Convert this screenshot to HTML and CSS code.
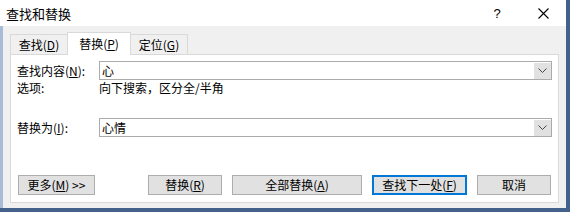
FILE: index.html
```html
<!DOCTYPE html>
<html lang="zh-CN">
<head>
<meta charset="utf-8">
<link rel="stylesheet" href="styles.css">
</head>
<body>
<div class="window">
  <div class="titlebar">
    <span class="title">查找和替换</span>
    <span class="help">?</span>
    <span class="close"><svg width="11" height="11" viewBox="0 0 11 11"><path d="M0.5 0.5 L10.5 10.5 M10.5 0.5 L0.5 10.5" stroke="#000" stroke-width="1.1" fill="none"/></svg></span>
  </div>
  <div class="main">
    <div class="gutter"></div>
    <div class="body">
      <div class="tabs">
        <div class="tab">查找(<u>D</u>)</div>
        <div class="tab active">替换(<u>P</u>)</div>
        <div class="tab">定位(<u>G</u>)</div>
      </div>
      <div class="panel">
        <div class="row">
          <span class="label">查找内容(<u>N</u>):</span>
          <div class="combo"><span class="value">心</span><span class="drop"><svg width="9" height="5" viewBox="0 0 9 5"><path d="M0.5 0.5 L4.5 4.5 L8.5 0.5" stroke="#444" stroke-width="1" fill="none"/></svg></span></div>
        </div>
        <div class="row options">
          <span class="label">选项:</span>
          <span class="opt">向下搜索，区分全/半角</span>
        </div>
        <div class="row replace">
          <span class="label">替换为(<u>I</u>):</span>
          <div class="combo"><span class="value">心情</span><span class="drop"><svg width="9" height="5" viewBox="0 0 9 5"><path d="M0.5 0.5 L4.5 4.5 L8.5 0.5" stroke="#444" stroke-width="1" fill="none"/></svg></span></div>
        </div>
        <div class="buttons">
          <button class="btn more">更多(<u>M</u>) &gt;&gt;</button>
          <div class="group">
            <button class="btn w74">替换(<u>R</u>)</button>
            <button class="btn w130">全部替换(<u>A</u>)</button>
            <button class="btn w95 default">查找下一处(<u>F</u>)</button>
            <button class="btn w74">取消</button>
          </div>
        </div>
      </div>
    </div>
  </div>
</div>
</body>
</html>
```
FILE: styles.css
```css
html, body {
  margin: 0;
  padding: 0;
}
body {
  width: 570px;
  height: 212px;
  background: #44618b;
  font-family: "Noto Sans CJK SC", "DejaVu Sans", sans-serif;
  font-size: 12px;
  color: #000;
  overflow: hidden;
}
u {
  text-decoration: underline;
  text-underline-offset: 1px;
}
.window {
  width: 566px;
  height: 208px;
  display: flex;
  flex-direction: column;
  background: #f0f0f0;
}
.titlebar {
  height: 26px;
  background: #fff;
  display: flex;
  align-items: center;
  padding-left: 6px;
  font-size: 13px;
}
.title {
  flex: 1;
}
.help {
  width: 12px;
  text-align: center;
  font-family: "Liberation Sans", sans-serif;
  font-size: 13px;
  margin-right: 35px;
}
.close {
  display: flex;
  margin-right: 17px;
}
.main {
  flex: 1;
  display: flex;
}
.gutter {
  width: 3px;
  background: #a8bcd8;
}
.body {
  flex: 1;
  padding: 6px 4px 5px 7px;
  display: flex;
  flex-direction: column;
}
.tabs {
  display: flex;
  align-items: flex-end;
  height: 22px;
}
.tab {
  height: 19px;
  line-height: 19px;
  padding: 0 7px;
  border: 1px solid #d9d9d9;
  border-bottom: none;
  background: #f0f0f0;
  width: 42px;
  text-align: center;
  white-space: nowrap;
}
.tab + .tab {
  margin-left: -1px;
}
.tab.active {
  height: 22px;
  line-height: 21px;
  background: #fff;
  position: relative;
  z-index: 1;
  margin-bottom: -1px;
  width: 48px;
}
.panel {
  width: 535px;
  height: 141px;
  border: 1px solid #d9d9d9;
  background: #fff;
  padding: 6px 6px 0 6px;
  display: flex;
  flex-direction: column;
}
.row {
  display: flex;
  align-items: center;
}
.label {
  width: 82px;
  flex: none;
  white-space: nowrap;
}
.combo {
  flex: 1;
  height: 17px;
  border: 1px solid #ababab;
  display: flex;
  align-items: center;
  justify-content: space-between;
  background: #fff;
}
.value {
  padding-left: 2px;
  line-height: 17px;
}
.drop {
  width: 17px;
  height: 16px;
  background: #e1e1e1;
  display: flex;
  align-items: center;
  justify-content: center;
}
.options {
  height: 16px;
  line-height: 16px;
}
.replace {
  margin-top: 22px;
}
.opt {
  white-space: nowrap;
}
.buttons {
  margin-top: 38px;
  display: flex;
  padding-left: 1px;
  padding-right: 1px;
}
.group {
  margin-left: auto;
  display: flex;
  gap: 10px;
}
.btn {
  height: 20px;
  padding: 0;
  margin: 0;
  border: 1px solid #adadad;
  background: #e1e1e1;
  font-family: "Noto Sans CJK SC", "DejaVu Sans", sans-serif;
  font-size: 12px;
  line-height: 18px;
  color: #000;
  box-sizing: border-box;
}
.more { width: 77px; }
.w74 { width: 74px; }
.w130 { width: 130px; }
.w95 { width: 95px; }
.default {
  border: 2px solid #0078d7;
  line-height: 16px;
}
```
